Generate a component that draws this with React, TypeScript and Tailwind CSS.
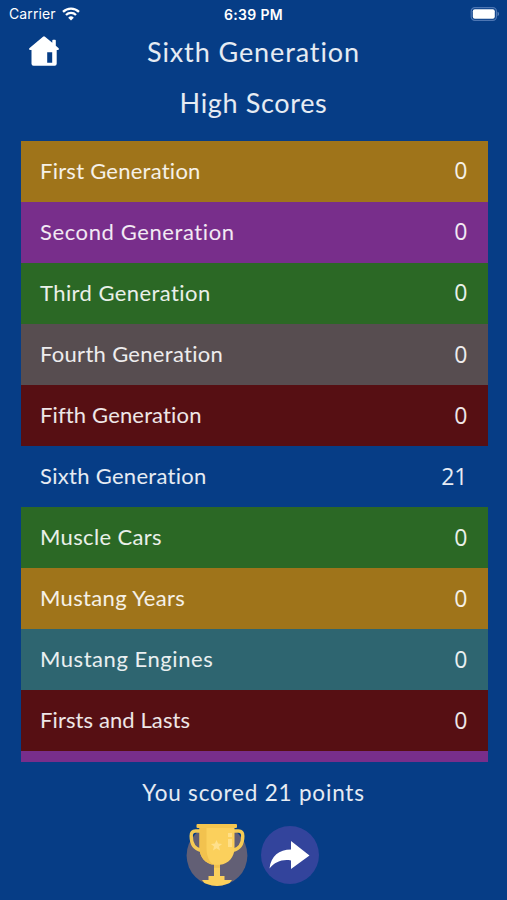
const scores = [
  { name: "First Generation", score: 0, row: "bg-[#9f741a]", text: "tracking-[0.25px]" },
  { name: "Second Generation", score: 0, row: "bg-[#782e8b]", text: "tracking-[0.6px]" },
  { name: "Third Generation", score: 0, row: "bg-[#2b6825]", text: "tracking-[0.42px]" },
  { name: "Fourth Generation", score: 0, row: "bg-[#574d50]", text: "tracking-[0.3px]" },
  { name: "Fifth Generation", score: 0, row: "bg-[#560f13]", text: "tracking-[0.15px]" },
  { name: "Sixth Generation", score: 21, row: "bg-[#063d86]", text: "tracking-[0.3px]" },
  { name: "Muscle Cars", score: 0, row: "bg-[#2b6825]", text: "tracking-[0.35px]" },
  { name: "Mustang Years", score: 0, row: "bg-[#9f741a]", text: "tracking-[0.35px]" },
  { name: "Mustang Engines", score: 0, row: "bg-[#2e6570]", text: "tracking-[0.55px]" },
  { name: "Firsts and Lasts", score: 0, row: "bg-[#560f13]", text: "tracking-[0.1px]" },
];

function StatusBar() {
  return (
    <div className="grid h-[27px] grid-cols-3 items-center pl-[9px] pr-[7px] font-['Inter',sans-serif]">
      <div className="flex items-center gap-[6px]">
        <span className="text-[14px] tracking-[0.1px]">Carrier</span>
        <svg width="18" height="14" viewBox="0 0 18 14" fill="none" stroke="currentColor" strokeWidth="2.3">
          <path d="M1 4.9a11.4 11.4 0 0 1 16 0" />
          <path d="M4 8a7.1 7.1 0 0 1 10 0" />
          <path d="M9 13.5 6.2 10.7a4 4 0 0 1 5.6 0Z" fill="currentColor" stroke="none" />
        </svg>
      </div>
      <span className="pr-[2px] pt-[1px] text-center text-[14px] font-semibold tracking-[0.35px]">6:39 PM</span>
      <svg className="justify-self-end" width="30" height="14" viewBox="0 0 30 14">
        <rect x="1.2" y="0.7" width="25.2" height="12.6" rx="3.6" fill="none" stroke="#4d76b3" strokeWidth="1.2" />
        <rect x="2.8" y="2.3" width="22" height="9.4" rx="2" fill="white" />
        <path d="M27.6 4.8c1.6.6 1.6 3.8 0 4.4Z" fill="#6f92c4" />
      </svg>
    </div>
  );
}

function HomeIcon() {
  return (
    <svg width="30" height="31" viewBox="0 0 30 31" fill="white">
      <path
        fillRule="evenodd"
        d="M14 .7q1-.9 2 0l7.3 6V4.6q0-.8.8-.8h1.9q.8 0 .8.8v5.1l2.6 2.2q.7.7.5 1.4-.2.8-1 .8h-1.2v13.7q0 2-2 2H4.5q-2 0-2-2V14.1H1.1q-.8 0-1-.8-.2-.7.5-1.4ZM18.2 16.2v10.6h5V16.2Z"
      />
    </svg>
  );
}

function TrophyIcon() {
  return (
    <svg width="62" height="64" viewBox="0 0 62 64">
      <circle cx="31" cy="32.5" r="30.4" fill="#625f75" />
      <path
        d="M14 8H9.500Q5.200 8 5.200 13C5.200 21 9 26 15 27.300M48 8h4.500q4.300 0 4.300 5c0 8-3.800 13-9.800 14.300"
        fill="none"
        stroke="#f5cb55"
        strokeWidth="3.4"
      />
      <path d="M13.500 4h35v21c0 9-6 16-14.500 16.800V53h4.500v4H46q-1.500 3-5 4-10 4-20 0-3.500-1-5-4h6.500v-4H28V41.800C19.500 41 13.500 34 13.500 25Z" fill="#fbd05c" />
      <path d="M13.500 4h7v21c0 8 3 15 7.500 16.800C19.500 41 13.500 34 13.500 25Z" fill="#f2c24e" />
      <path d="M28 41.800h6v3h-6Z" fill="#f2c24e" />
      <rect x="10.5" y="1" width="40.5" height="4" rx="1" fill="#f4c64f" />
      <path d="m30.500 17 1.600 3.600 4 .3-3.100 2.500 1 4-3.500-2.100-3.500 2.100 1-4-3.100-2.500 4-.3Z" fill="#ffe08b" />
      <path d="M42 10h4v4h-4Zm0 6h4v8h-4Z" fill="#ffdf87" />
    </svg>
  );
}

function ShareIcon() {
  return (
    <svg width="58" height="58" viewBox="0 0 58 58">
      <circle cx="29" cy="29" r="29" fill="#33449c" />
      <path d="M30 15 48.500 29.500 30 43v-8.500c-9-1.500-16 1.500-21.500 8C10 30 18 23.500 30 23.500Z" fill="white" />
    </svg>
  );
}

export default function App() {
  return (
    <div className="flex h-[900px] w-full flex-col overflow-hidden bg-[#063d86] font-['Lato','Liberation_Sans',sans-serif] text-white">
      <StatusBar />

      <header className="grid h-[50px] grid-cols-[59px_1fr_59px] items-center">
        <button className="-mt-0.5 justify-self-end" aria-label="Home">
          <HomeIcon />
        </button>
        <h1 className="text-center text-[27px] leading-[36px] tracking-[0.9px] text-white/90">Sixth Generation</h1>
      </header>
      <h2 className="h-[63.5px] pt-2 text-center text-[27px] leading-[36px] tracking-[0.65px] text-white/90">High Scores</h2>

      <ul className="ml-[20.5px] mr-[19.5px] h-[621.5px] overflow-hidden text-white/90">
        {scores.map((item) => (
          <li key={item.name} className={`flex h-[61.1px] items-center justify-between pb-[2px] pl-[19.5px] pr-5 text-[22px] ${item.row}`}>
            <span className={item.text}>{item.name}</span>
            <span className="pt-[1px] font-['Open_Sans',sans-serif] text-[23px]">{item.score}</span>
          </li>
        ))}
        <li className="h-[61.1px] bg-[#782e8b]" />
      </ul>

      <p className="pt-[15px] text-center text-[22.5px] leading-[32px] tracking-[0.8px] text-white/90">You scored 21 points</p>
      <div className="flex h-[91px] items-center justify-center gap-[13px] pr-[2px]">
        <button aria-label="Leaderboard">
          <TrophyIcon />
        </button>
        <button aria-label="Share">
          <ShareIcon />
        </button>
      </div>
    </div>
  );
}
